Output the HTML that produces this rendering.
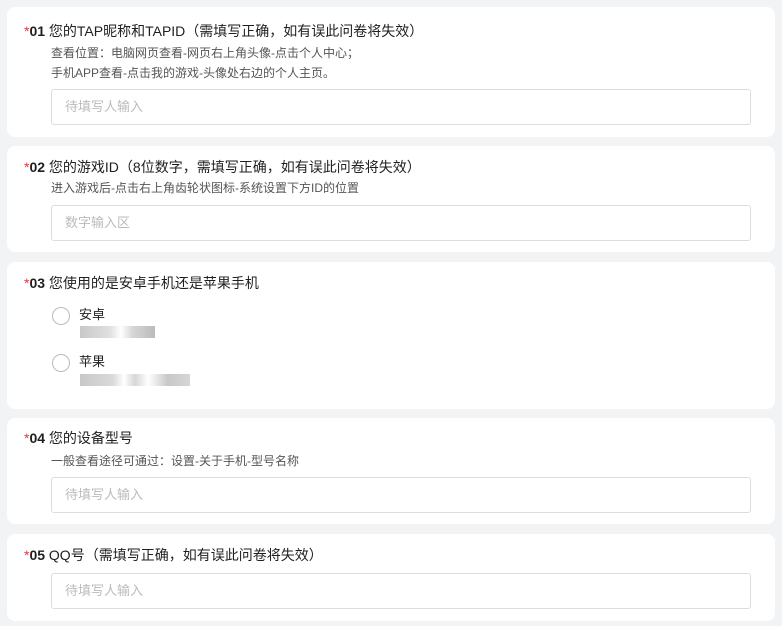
<!DOCTYPE html>
<html><head><meta charset="utf-8"><style>
body{margin:0;width:782px;height:626px;background:#f2f3f5;font-family:"Liberation Sans","Noto Sans CJK SC",sans-serif;overflow:hidden;position:relative}
.card{position:absolute;left:7px;width:768px;background:#fff;border-radius:8px}
.t{position:absolute;left:17px;font-size:14px;color:#1f1f1f;white-space:nowrap;line-height:18px}
.t b{color:#e23b3b;font-weight:normal}
.t i{font-style:normal;font-weight:bold}
.s{position:absolute;left:44px;font-size:12px;color:#555;white-space:nowrap;line-height:16px}
.in{position:absolute;left:44px;border:1px solid #ddd;border-radius:3px;box-sizing:border-box;width:700px;height:36px;font-size:13px;color:#bbb;padding-left:13px;line-height:34px}
.r{position:absolute;left:45px;width:16px;height:16px;border:1px solid #bbb;border-radius:50%}
.rl{position:absolute;left:72px;font-size:13px;color:#222;line-height:16px}
.bl{position:absolute;height:12px;background:#ddd}
</style></head><body>
<div class="card" style="top:7px;height:130px">
<div class="t" style="top:15px"><b>*</b><i>01</i> 您的TAP昵称和TAPID（需填写正确，如有误此问卷将失效）</div>
<div class="s" style="top:38px">查看位置：电脑网页查看-网页右上角头像-点击个人中心；</div>
<div class="s" style="top:58px">手机APP查看-点击我的游戏-头像处右边的个人主页。</div>
<div class="in" style="top:82px">待填写人输入</div>
</div>
<div class="card" style="top:146px;height:106px">
<div class="t" style="top:12px"><b>*</b><i>02</i> 您的游戏ID（8位数字，需填写正确，如有误此问卷将失效）</div>
<div class="s" style="top:34px">进入游戏后-点击右上角齿轮状图标-系统设置下方ID的位置</div>
<div class="in" style="top:59px">数字输入区</div>
</div>
<div class="card" style="top:262px;height:147px">
<div class="t" style="top:12px"><b>*</b><i>03</i> 您使用的是安卓手机还是苹果手机</div>
<div class="r" style="top:45px"></div><div class="rl" style="top:45px">安卓</div>
<div class="bl" style="left:73px;top:64px;width:75px;background:linear-gradient(90deg,#c8c8c8,#e0e0e0 40%,#fff 55%,#d6d6d6 70%,#bbb)"></div>
<div class="r" style="top:92px"></div><div class="rl" style="top:92px">苹果</div>
<div class="bl" style="left:73px;top:112px;width:110px;background:linear-gradient(90deg,#c8c8c8,#dadada 30%,#fff 40%,#d6d6d6 50%,#fff 62%,#c8c8c8 80%,#d6d6d6)"></div>
</div>
<div class="card" style="top:418px;height:106px">
<div class="t" style="top:11px"><b>*</b><i>04</i> 您的设备型号</div>
<div class="s" style="top:35px">一般查看途径可通过：设置-关于手机-型号名称</div>
<div class="in" style="top:59px">待填写人输入</div>
</div>
<div class="card" style="top:534px;height:87px">
<div class="t" style="top:12px"><b>*</b><i>05</i> QQ号（需填写正确，如有误此问卷将失效）</div>
<div class="in" style="top:39px">待填写人输入</div>
</div>
</body></html>
